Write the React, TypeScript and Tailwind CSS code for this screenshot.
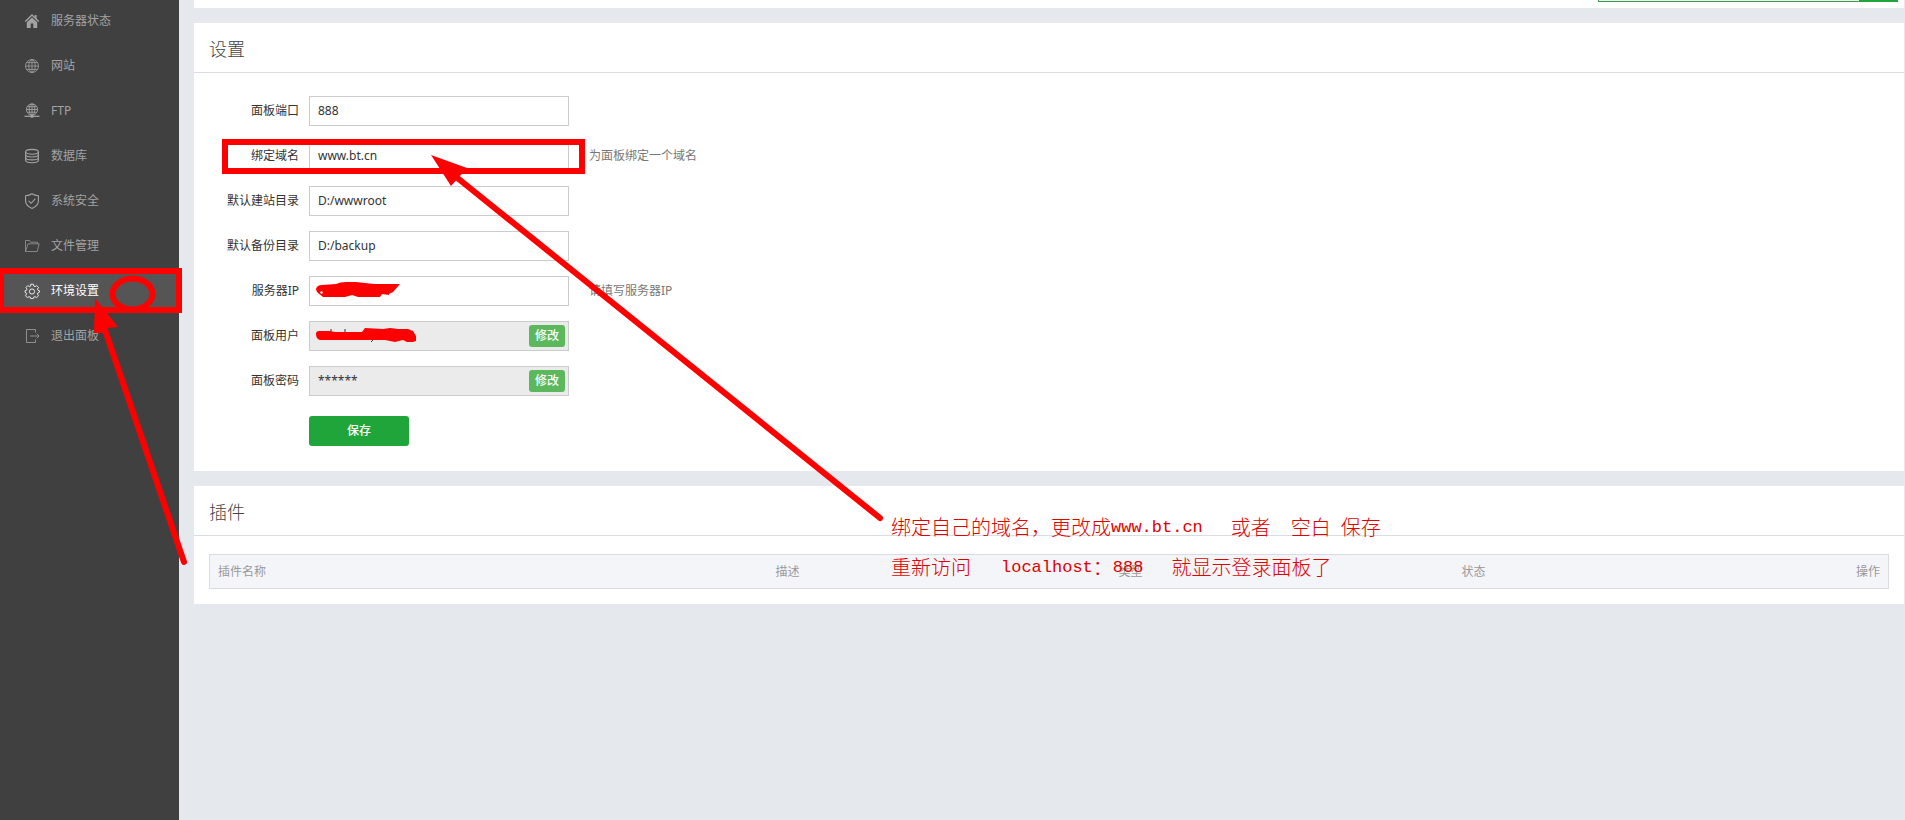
import type { ReactNode } from "react";
import clsx from "clsx";

const iconProps = {
  width: 16,
  height: 16,
  viewBox: "0 0 16 16",
  fill: "none",
  stroke: "currentColor",
  "aria-hidden": true,
} as const;

const ICONS: Record<string, ReactNode> = {
  home: (
    <svg {...iconProps} stroke="none" fill="currentColor">
      <path d="M8 1 0.8 8l1 1L8 3.1 14.2 9l1-1-2.6-2.6V2h-1.8v1.7z" />
      <path d="M8 4.4 2.8 9.3V15h3.9v-4.4h2.6V15h3.9V9.3z" />
    </svg>
  ),
  globe: (
    <svg {...iconProps} strokeOpacity="0.8">
      <circle cx="8" cy="8" r="6.5" />
      <ellipse cx="8" cy="8" rx="3.2" ry="6.5" />
      <path d="M8 1.5v13M1.5 8h13M2.6 4.6h10.8M2.6 11.4h10.8" />
    </svg>
  ),
  ftp: (
    <svg {...iconProps} strokeOpacity="0.9">
      <circle cx="8" cy="6.5" r="5.6" />
      <ellipse cx="8" cy="6.5" rx="2.8" ry="5.6" />
      <path d="M8 1v11M2.5 6.5h11M3.3 3.8h9.4M3.3 9.2h9.4" />
      <path d="M0.5 13.3h15" strokeWidth="1.4" />
      <ellipse cx="8" cy="13.3" rx="2" ry="1.5" fill="currentColor" stroke="none" />
    </svg>
  ),
  database: (
    <svg {...iconProps} strokeWidth="1.1">
      <ellipse cx="8" cy="3.8" rx="6.4" ry="2.4" />
      <path d="M1.6 3.8v8.5c0 1.3 2.9 2.4 6.4 2.4s6.4-1.1 6.4-2.4V3.8" />
      <path d="M1.6 6.6C1.6 7.9 4.5 9 8 9s6.4-1.1 6.4-2.4M1.6 9.5c0 1.3 2.9 2.4 6.4 2.4s6.4-1.1 6.4-2.4" />
    </svg>
  ),
  shield: (
    <svg {...iconProps} strokeWidth="1.1">
      <path d="M8 0.8C6.3 2 4 2.7 1.6 2.8v5.4c0 3.2 2.7 5.4 6.4 7.2 3.7-1.8 6.4-4 6.4-7.2V2.8C12 2.7 9.7 2 8 .8z" />
      <path d="m4.6 7.8 2.6 2.5 4.2-4.7" />
    </svg>
  ),
  folder: (
    <svg {...iconProps} strokeOpacity="0.7">
      <path d="M1.5 13.5v-11h4l1.2 1.7h6.8v1.6M1.5 13.5 4 5.8h11.2l-2 7.7z" />
    </svg>
  ),
  gear: (
    <svg {...iconProps} strokeOpacity="0.85">
      <path d="M6.7 1.2h2.6l.5 1.9 1.2.5 1.7-1 1.8 1.8-1 1.7.5 1.2 1.5.5v1.4l-1.6.7-.4 1.1 1 1.8-1.8 1.8-1.8-1-1.1.4-.5 1.6H6.7l-.5-1.6-1.1-.4-1.8 1-1.8-1.8 1-1.8-.4-1.1L1 9.2V7.8l1.5-.5.5-1.2-1-1.7 1.8-1.8 1.7 1 1.2-.5z" />
      <circle cx="8" cy="8.5" r="2.6" />
    </svg>
  ),
  exit: (
    <svg {...iconProps} strokeOpacity="0.8">
      <path d="M11.5 4.5v-3h-9v13h9v-3M6 8h9M12.7 5.7 15 8l-2.3 2.3" />
    </svg>
  ),
};

const NAV_ITEMS = [
  { label: "服务器状态", icon: "home" },
  { label: "网站", icon: "globe" },
  { label: "FTP", icon: "ftp" },
  { label: "数据库", icon: "database" },
  { label: "系统安全", icon: "shield" },
  { label: "文件管理", icon: "folder" },
  { label: "环境设置", icon: "gear", active: true },
  { label: "退出面板", icon: "exit" },
];

type Field = {
  id: string;
  label: string;
  value: string;
  hint?: string;
  locked?: boolean;
};

const FIELDS: Field[] = [
  { id: "port", label: "面板端口", value: "888" },
  { id: "domain", label: "绑定域名", value: "www.bt.cn", hint: "为面板绑定一个域名" },
  { id: "sites", label: "默认建站目录", value: "D:/wwwroot" },
  { id: "backup", label: "默认备份目录", value: "D:/backup" },
  { id: "ip", label: "服务器IP", value: "", hint: "请填写服务器IP" },
  { id: "user", label: "面板用户", value: "", locked: true },
  { id: "password", label: "面板密码", value: "******", locked: true },
];

function Sidebar() {
  return (
    <aside className="w-[179px] shrink-0 bg-[#404040]">
      <nav className="-mt-0.5">
        {NAV_ITEMS.map((item) => (
          <a
            key={item.label}
            href="#"
            className={clsx(
              "flex h-[45px] items-center gap-[11px] pl-6",
              item.active ? "bg-[#555555] text-white" : "text-[#a3a3a3]",
            )}
          >
            {ICONS[item.icon]}
            <span>{item.label}</span>
          </a>
        ))}
      </nav>
    </aside>
  );
}

function Card({ title, children }: { title: string; children: ReactNode }) {
  return (
    <section className="bg-white">
      <h2 className="flex h-[50px] items-center border-b border-[#d9dce0] px-[15px] pt-0.5 text-lg font-light text-[#444444]">
        {title}
      </h2>
      {children}
    </section>
  );
}

function FieldRow({ field }: { field: Field }) {
  return (
    <div className="flex h-[30px] items-center">
      <label htmlFor={field.id} className="mr-[10px] w-[105px] shrink-0 text-right text-[#333333]">
        {field.label}
      </label>
      <div className="relative">
        <input
          id={field.id}
          type="text"
          defaultValue={field.value}
          readOnly={field.locked}
          className={clsx(
            "block h-[30px] w-[260px] border border-[#cccccc] px-2 pb-0.5 text-[#333333] outline-none",
            field.locked ? "bg-[#ebebeb]" : "bg-white",
          )}
        />
        {field.locked && (
          <button
            type="button"
            className="absolute top-1 right-1 h-[22px] w-9 rounded-[3px] bg-[#5cb85c] font-medium text-white"
          >
            修改
          </button>
        )}
      </div>
      {field.hint && <span className="ml-5 text-[#777777]">{field.hint}</span>}
    </div>
  );
}

function PluginTable() {
  return (
    <table className="w-full table-fixed border border-[#d9dce0] bg-[#f4f5f9] text-[#999999]">
      <thead>
        <tr className="h-[34px] text-left">
          <th className="w-[558px] px-2 font-normal">插件名称</th>
          <th className="px-2 font-normal">描述</th>
          <th className="px-2 font-normal">类型</th>
          <th className="px-2 font-normal">状态</th>
          <th className="w-[92px] px-2 text-right font-normal">操作</th>
        </tr>
      </thead>
    </table>
  );
}

// Red marker strokes drawn over the panel
function Markup() {
  return (
    <svg
      width="900"
      height="600"
      viewBox="0 0 900 600"
      className="pointer-events-none absolute top-0 left-0"
      fill="none"
      stroke="#ff0000"
      aria-hidden="true"
    >
      <rect x="225" y="142" width="357" height="29" strokeWidth="6" />
      <rect x="1" y="271" width="178" height="39" strokeWidth="6" />
      <ellipse cx="132.500" cy="294" rx="20" ry="15.500" strokeWidth="6" />
      <path d="M184 562 104 327" strokeWidth="6" strokeLinecap="round" />
      <path d="M95 298 118 327 107 328 105 333 94 333z" fill="#ff0000" stroke="none" />
      <path d="M880 518 450 172" strokeWidth="6" strokeLinecap="round" />
      <path d="M431 155 467 168 451 186z" fill="#ff0000" stroke="none" />
      <path
        d="M316 289Q317 285 322 285L336 284Q340 282 346 282L356 282 374 284H400L393 292 389 294 389 295 382 294 380 297H358L352 295 345 297H323L318 293Q316 291 316 289z"
        fill="#ff0000"
        stroke="none"
      />
      <circle cx="321.500" cy="292.500" r="1.200" fill="#ffffff" stroke="none" />
      <path d="M331 329v4M345 329v4M374 339l-3 3" stroke="#333333" />
      <path
        d="M316 334Q316 331 319 331L330 331 335 332H362L365 328 383 329 390 328 398 329H408L413 331 416 336V341L413 342H407L403 340 395 342 385 340H320Q316 339 316 334z"
        fill="#ff0000"
        stroke="none"
      />
    </svg>
  );
}

function Instructions() {
  return (
    <div className="pointer-events-none absolute top-[508px] left-[891px] text-xl leading-10 font-light whitespace-nowrap text-[#e00000]">
      <p className="flex h-10 items-center">
        <span>绑定自己的域名，更改成</span>
        <span className="font-[Liberation_Mono,monospace] text-[17px]">www.bt.cn</span>
        <span className="ml-7">或者</span>
        <span className="ml-5">空白</span>
        <span className="ml-[10px]">保存</span>
      </p>
      <p className="flex h-10 items-center">
        <span>重新访问</span>
        <span className="ml-[30px] font-[Liberation_Mono,monospace] text-[17px]">localhost</span>
        <span>：</span>
        <span className="font-[Liberation_Mono,monospace] text-[17px]">888</span>
        <span className="ml-7">就显示登录面板了</span>
      </p>
    </div>
  );
}

export default function App() {
  return (
    <div className="relative flex min-h-screen overflow-hidden bg-[#e5e8ed] font-['Noto_Sans','Noto_Sans_CJK_SC',sans-serif] text-xs">
      <Sidebar />
      <main className="flex min-w-0 flex-1 flex-col gap-[15px] pr-px pl-[15px]">
        <div className="flex h-2 justify-end bg-white pr-[6px]">
          <div className="h-0.5 w-[261px] border-b border-l border-[#3f9a50] bg-[#e9f7ec]" />
          <div className="h-0.5 w-[39px] bg-[#20a53a]" />
        </div>

        <Card title="设置">
          <form className="flex flex-col gap-[15px] pt-[23px] pb-[25px]">
            {FIELDS.map((field) => (
              <FieldRow key={field.id} field={field} />
            ))}
            <button
              type="button"
              className="mt-[5px] ml-[115px] h-[30px] w-[100px] rounded-[3px] bg-[#20a53a] font-medium text-white"
            >
              保存
            </button>
          </form>
        </Card>

        <Card title="插件">
          <div className="px-[15px] pt-[18px] pb-[15px]">
            <PluginTable />
          </div>
        </Card>
      </main>
      <Markup />
      <Instructions />
    </div>
  );
}
